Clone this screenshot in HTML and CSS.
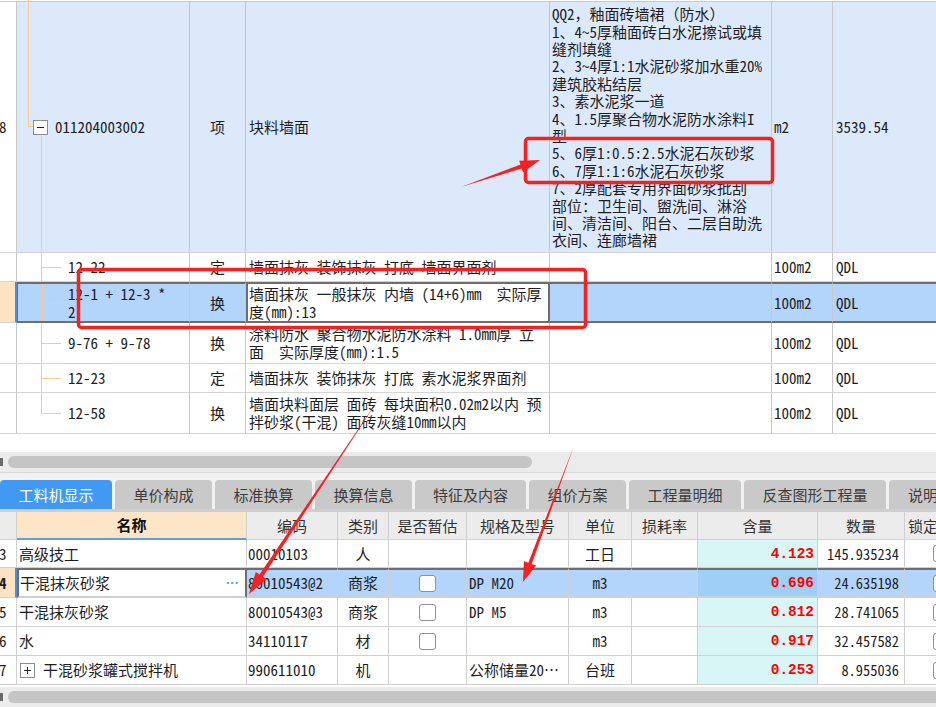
FILE: index.html
```html
<!DOCTYPE html>
<html lang="zh-CN">
<head>
<meta charset="utf-8">
<title>工料机显示</title>
<link rel="stylesheet" href="styles.css">
</head>
<body>
<div class="top">
  <div class="row h8 blue">
    <div class="c n">8</div>
    <div class="c code tree8"><span class="hl"></span><span class="minus"></span><span class="codetxt">011204003002</span></div>
    <div class="c ctr">项</div>
    <div class="c name">块料墙面</div>
    <div class="c feat"><div>QQ2，釉面砖墙裙（防水）<br>1、4~5厚釉面砖白水泥擦试或填<br>缝剂填缝<br>2、3~4厚1:1水泥砂浆加水重20%<br>建筑胶粘结层<br>3、素水泥浆一道<br>4、1.5厚聚合物水泥防水涂料I<br>型<br>5、6厚1:0.5:2.5水泥石灰砂浆<br>6、7厚1:1:6水泥石灰砂浆<br>7、2厚配套专用界面砂浆批刮<br>部位：卫生间、盥洗间、淋浴<br>间、清洁间、阳台、二层自助洗<br>衣间、连廊墙裙</div></div>
    <div class="c unit">m2</div>
    <div class="c qty">3539.54</div>
  </div>
  <div class="row h29">
    <div class="c n"></div>
    <div class="c code tl">12-22</div>
    <div class="c ctr">定</div>
    <div class="c name">墙面抹灰 装饰抹灰 打底 墙面界面剂</div>
    <div class="c feat"></div>
    <div class="c unit">100m2</div>
    <div class="c qty">QDL</div>
  </div>
  <div class="row h41 sel">
    <div class="c n"></div>
    <div class="c code tl first"><div>12-1 + 12-3 *<br>2</div></div>
    <div class="c ctr">换</div>
    <div class="c name edit"><div>墙面抹灰 一般抹灰 内墙 (14+6)mm  实际厚<br>度(mm):13</div></div>
    <div class="c feat"></div>
    <div class="c unit">100m2</div>
    <div class="c qty">QDL</div>
  </div>
  <div class="row h41">
    <div class="c n"></div>
    <div class="c code tl">9-76 + 9-78</div>
    <div class="c ctr">换</div>
    <div class="c name"><div>涂料防水 聚合物水泥防水涂料 1.0mm厚 立<br>面  实际厚度(mm):1.5</div></div>
    <div class="c feat"></div>
    <div class="c unit">100m2</div>
    <div class="c qty">QDL</div>
  </div>
  <div class="row h29">
    <div class="c n"></div>
    <div class="c code tl">12-23</div>
    <div class="c ctr">定</div>
    <div class="c name">墙面抹灰 装饰抹灰 打底 素水泥浆界面剂</div>
    <div class="c feat"></div>
    <div class="c unit">100m2</div>
    <div class="c qty">QDL</div>
  </div>
  <div class="row h41">
    <div class="c n"></div>
    <div class="c code tl last">12-58</div>
    <div class="c ctr">换</div>
    <div class="c name"><div>墙面块料面层 面砖 每块面积0.02m2以内 预<br>拌砂浆(干混) 面砖灰缝10mm以内</div></div>
    <div class="c feat"></div>
    <div class="c unit">100m2</div>
    <div class="c qty">QDL</div>
  </div>
</div>

<div class="gap"></div>
<div class="hs"><span class="arr"></span><span class="thumb t1"></span></div>

<div class="tabs">
  <div class="tab w5 on">工料机显示</div>
  <div class="tab">单价构成</div>
  <div class="tab">标准换算</div>
  <div class="tab">换算信息</div>
  <div class="tab w5s">特征及内容</div>
  <div class="tab">组价方案</div>
  <div class="tab w5">工程量明细</div>
  <div class="tab w7">反查图形工程量</div>
  <div class="tab">说明信息</div>
</div>

<div class="bt">
  <div class="row bh">
    <div class="c n"></div>
    <div class="c ctr hname">名称</div>
    <div class="c ctr">编码</div>
    <div class="c ctr">类别</div>
    <div class="c ctr">是否暂估</div>
    <div class="c ctr">规格及型号</div>
    <div class="c ctr">单位</div>
    <div class="c ctr">损耗率</div>
    <div class="c ctr">含量</div>
    <div class="c ctr">数量</div>
    <div class="c lockh">锁定</div>
  </div>
  <div class="row b28">
    <div class="c n">3</div>
    <div class="c bl">高级技工</div>
    <div class="c bcode">00010103</div>
    <div class="c ctr">人</div>
    <div class="c"></div>
    <div class="c"></div>
    <div class="c ctr">工日</div>
    <div class="c"></div>
    <div class="c num">4.123</div>
    <div class="c qn">145.935234</div>
    <div class="c lock"><span class="cb"></span></div>
  </div>
  <div class="row b30 sel">
    <div class="c n nb">4</div>
    <div class="c bl edit first">干混抹灰砂浆<span class="dots">···</span></div>
    <div class="c bcode">80010543@2</div>
    <div class="c ctr">商浆</div>
    <div class="c ctr"><span class="cb"></span></div>
    <div class="c spec">DP M20</div>
    <div class="c ctr">m3</div>
    <div class="c"></div>
    <div class="c num">0.696</div>
    <div class="c qn">24.635198</div>
    <div class="c lock"><span class="cb"></span></div>
  </div>
  <div class="row b29">
    <div class="c n">5</div>
    <div class="c bl">干混抹灰砂浆</div>
    <div class="c bcode">80010543@3</div>
    <div class="c ctr">商浆</div>
    <div class="c ctr"><span class="cb"></span></div>
    <div class="c spec">DP M5</div>
    <div class="c ctr">m3</div>
    <div class="c"></div>
    <div class="c num">0.812</div>
    <div class="c qn">28.741065</div>
    <div class="c lock"><span class="cb"></span></div>
  </div>
  <div class="row b29">
    <div class="c n">6</div>
    <div class="c bl">水</div>
    <div class="c bcode">34110117</div>
    <div class="c ctr">材</div>
    <div class="c ctr"><span class="cb"></span></div>
    <div class="c spec"></div>
    <div class="c ctr">m3</div>
    <div class="c"></div>
    <div class="c num">0.917</div>
    <div class="c qn">32.457582</div>
    <div class="c lock"><span class="cb"></span></div>
  </div>
  <div class="row b29">
    <div class="c n">7</div>
    <div class="c bl"><span class="plus"></span>干混砂浆罐式搅拌机</div>
    <div class="c bcode">990611010</div>
    <div class="c ctr">机</div>
    <div class="c"></div>
    <div class="c spec">公称储量20…</div>
    <div class="c ctr">台班</div>
    <div class="c"></div>
    <div class="c num">0.253</div>
    <div class="c qn">8.955036</div>
    <div class="c lock"><span class="cb"></span></div>
  </div>
</div>

<div class="hs hs2"><span class="arr"></span><span class="thumb t2"></span></div>

<svg class="annot" width="936" height="707" viewBox="0 0 936 707">
  <rect x="525.5" y="138.5" width="247" height="44" rx="3" fill="none" stroke="#f52020" stroke-width="3.5"/>
  <rect x="78.5" y="269.5" width="507" height="58" rx="3" fill="none" stroke="#f52020" stroke-width="3.5"/>
  <polygon points="461,187 521.75,168.4 523,172.2 540,160 519.2,160.8 520.45,164.6" fill="#f52020"/>
  <polygon points="382,394 262.9,576.8 266.6,579.3 249,594 255.8,572.1 259.5,574.6" fill="#f52020"/>
  <polygon points="574,446 531.7,563.9 536.1,565.6 523,582 523.9,561 528.3,562.7" fill="#f52020"/>
</svg>
</body>
</html>
```

FILE: styles.css
```css
* { box-sizing: border-box; }
html, body { margin: 0; padding: 0; }
body {
  width: 936px;
  height: 707px;
  overflow: hidden;
  position: relative;
  background: #fff;
  color: #1e1e1e;
  font-family: "Noto Sans Mono CJK SC", "Noto Sans CJK SC", "Liberation Mono", monospace;
  font-size: 15px;
  line-height: 18px;
}

/* ---------- top grid ---------- */
.top { margin-top: 1px; border-top: 1px solid #c8c8c8; width: 1000px; }
.row { display: grid; }
.top .row { grid-template-columns: 17px 173px 56px 304px 222px 61px 167px; }
.c {
  display: flex;
  align-items: center;
  border-right: 1px solid #c8c8c8;
  border-bottom: 1px solid #d4d4d4;
  white-space: nowrap;
  overflow: hidden;
  position: relative;
  min-width: 0;
}
.h8 { height: 251px; }
.h29 { height: 29px; }
.h41 { height: 41px; }
.blue .c:not(.n) { background: #dce9fb; }
.n { padding-left: 0; text-indent: -1px; }
.ctr { justify-content: center; }
.name { padding-left: 3px; white-space: pre; }
.feat { padding-left: 2px; line-height: 17.4px; }
.unit { padding-left: 2px; }
.qty { padding-left: 3px; }
.code { padding-left: 51px; }

.tree8 { padding-left: 0; overflow: visible; }
.tree8::before { content: ""; position: absolute; left: 11px; top: -3px; height: 127px; border-left: 1px solid #fcc98c; }
.tree8::after { content: ""; position: absolute; left: 24px; top: 133px; bottom: -1px; border-left: 1px solid #fcc98c; }
.hl { position: absolute; left: 11px; top: 124px; width: 6px; border-top: 1px solid #fcc98c; }
.minus { flex: none; width: 15px; height: 15px; margin-left: 16px; border: 1px solid #8c8c8c; background: #fff; position: relative; }
.minus::after { content: ""; position: absolute; left: 3px; right: 3px; top: 6px; border-top: 1px solid #222; }
.codetxt { margin-left: 7px; }

.tl::before { content: ""; position: absolute; left: 24px; top: -2px; bottom: -2px; border-left: 1px solid #fcc98c; }
.tl::after { content: ""; position: absolute; left: 24px; width: 20px; top: 50%; border-top: 1px solid #fcc98c; }
.tl.last::before { bottom: 50%; }

/* selected rows */
.sel .c { border-top: 2px solid #6e6e6e; border-bottom: 2px solid #6e6e6e; background: #b3d4fb; }
.sel .c.n { border-top: none; border-bottom: 1px solid #d4d4d4; border-right: 2px solid #4390e6; background: #fde3c2; }
.sel .c.first { border-left: 1px solid #6e6e6e; }
.top .sel .c.first { padding-left: 50px; }
.sel .c.edit { background: #fff; border-left: 2px solid #6e6e6e; border-right: 2px solid #6e6e6e; }
.top .sel .c.edit { padding-left: 1px; }

/* ---------- scrollbars ---------- */
.gap { height: 18px; }
.hs { height: 20px; background: #ebebeb; display: flex; align-items: center; position: relative; }
.arr { width: 3px; height: 8px; background: #6a6a6a; flex: none; }
.thumb { height: 12px; border-radius: 6px; background: #c5c5c5; margin-left: 5px; flex: none; }
.t1 { width: 524px; }
.t2 { width: 940px; }
.hs2 { margin-top: 2px; }

/* ---------- tabs ---------- */
.tabs {
  height: 40px;
  border-top: 1px solid #d8d8d8;
  border-bottom: 3px solid #cfcfcf;
  background: #f1f1f1;
  padding-top: 7px;
  display: flex;
  gap: 3px;
  width: 1000px;
  font-family: "Noto Sans CJK SC", sans-serif;
  font-size: 15px;
}
.tab {
  flex: none;
  width: 97px;
  height: 29px;
  padding: 0;
  background: #c9c9c9;
  color: #3c3c3c;
  border-radius: 4px 4px 0 0;
  display: flex;
  align-items: center;
  justify-content: center;
}
.tab.w5 { width: 112px; }
.tab.w5s { width: 111px; }
.tab.w7 { width: 142px; }
.tab:last-child { width: 100px; justify-content: flex-start; padding-left: 19px; }
.tab.on { background: #4299f4; color: #fff; }

/* ---------- bottom grid ---------- */
.bt { width: 1000px; }
.bt .row { grid-template-columns: 17px 230px 91px 51px 78px 102px 63px 66px 120px 87px 95px; }
.bt .c { border-right-color: #d0d0d0; border-bottom-color: #d0d0d0; }
.bh { height: 28px; font-family: "Noto Sans CJK SC", sans-serif; color: #333; }
.bh .c { background: #ececec; }
.bh .c.hname { background: #fde6c8; font-weight: bold; color: #111; border-bottom: 2px solid #5b9ee6; }
.lockh { padding-left: 3px; }
.b28 { height: 28px; }
.b29 { height: 29px; }
.b30 { height: 30px; }
.bl { padding-left: 2px; font-family: "Noto Sans CJK SC", sans-serif; }
.bcode { padding-left: 1px; }
.spec { padding-left: 2px; }
.num { justify-content: flex-end; padding-right: 3px; background: #d9f6f7; color: #ff0000; font-weight: bold; font-family: "Liberation Mono", monospace; font-size: 14.4px; }
.sel .c.num { background: #9dcff7; }
.qn { justify-content: flex-end; padding-right: 5px; font-size: 14.4px; }
.lock { padding-left: 28px; }
.nb { font-weight: bold; }
.sel .c.bl.edit { padding-left: 1px; }
.dots { margin-left: auto; margin-right: 6px; color: #5a98d6; font-family: "Liberation Sans", sans-serif; font-size: 13px; font-weight: bold; letter-spacing: 0; }
.cb { width: 17px; height: 17px; border: 1px solid #909090; border-radius: 3px; background: #fff; flex: none; }
.plus { flex: none; width: 15px; height: 15px; border: 1px solid #8c8c8c; background: #fff; margin: 0 8px 0 1px; position: relative; }
.plus::before { content: ""; position: absolute; left: 3px; right: 3px; top: 6px; border-top: 1px solid #222; }
.plus::after { content: ""; position: absolute; top: 3px; bottom: 3px; left: 6px; border-left: 1px solid #222; }

/* ---------- annotations ---------- */
.annot { position: absolute; left: 0; top: 0; pointer-events: none; }
```
